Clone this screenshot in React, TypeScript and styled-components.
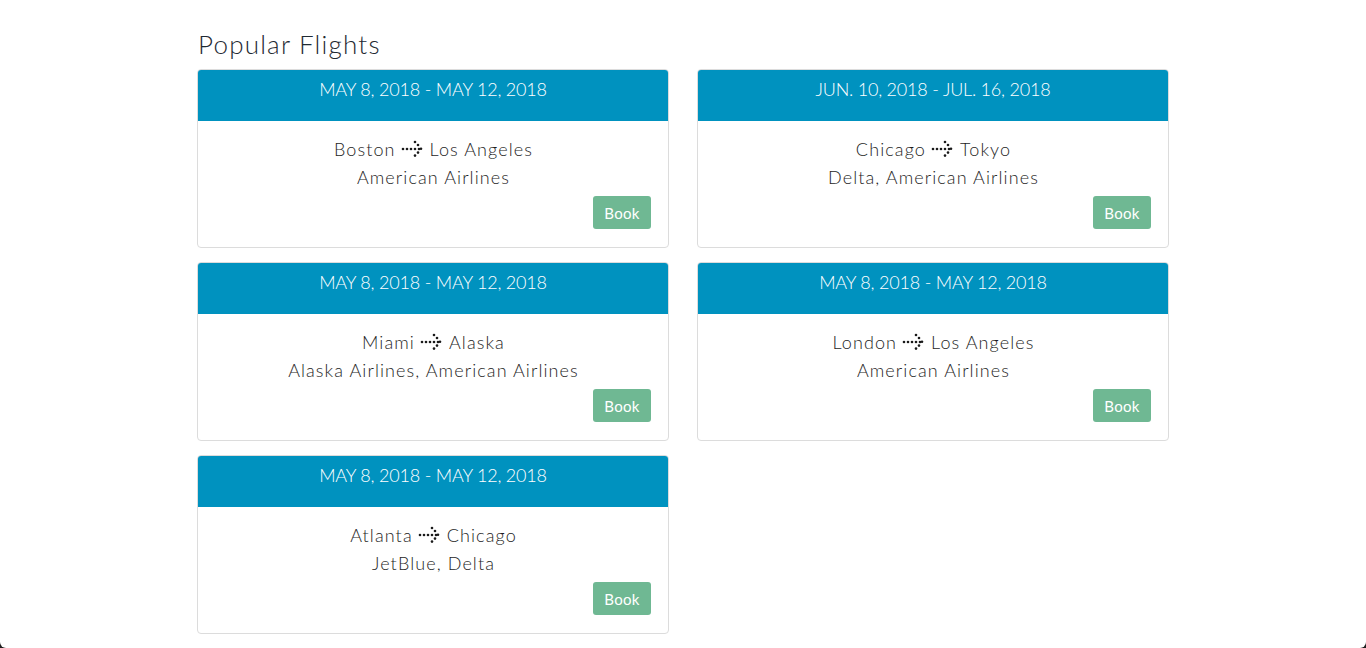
import styled, { createGlobalStyle } from 'styled-components';

interface Flight {
  dates: string,
  from: string,
  to: string,
  airlines: string,
}

const flights: Flight[] = [
  { dates: 'MAY 8, 2018 - MAY 12, 2018', from: 'Boston', to: 'Los Angeles', airlines: 'American Airlines' },
  { dates: 'JUN. 10, 2018 - JUL. 16, 2018', from: 'Chicago', to: 'Tokyo', airlines: 'Delta, American Airlines' },
  { dates: 'MAY 8, 2018 - MAY 12, 2018', from: 'Miami', to: 'Alaska', airlines: 'Alaska Airlines, American Airlines' },
  { dates: 'MAY 8, 2018 - MAY 12, 2018', from: 'London', to: 'Los Angeles', airlines: 'American Airlines' },
  { dates: 'MAY 8, 2018 - MAY 12, 2018', from: 'Atlanta', to: 'Chicago', airlines: 'JetBlue, Delta' },
];

const GlobalStyle = createGlobalStyle`
  html {
    background: #1e1e1e;
  }
  body {
    margin: 0;
    font-family: Lato, "Open Sans", sans-serif;
    font-weight: 300;
    color: #222;
  }
`;

const Page = styled.div`
  min-height: 648px;
  box-sizing: border-box;
  background: #fff;
  border-radius: 0 0 6px 6px;
  padding: 28px 0 14px;
`;

const Container = styled.div`
  width: 972px;
  margin: 0 auto;
`;

const Title = styled.h1`
  margin: 0 0 9px 1px;
  font-size: 26px;
  font-weight: 300;
  line-height: 32px;
  letter-spacing: 1.2px;
  color: #1f2a33;
`;

const Grid = styled.div`
  display: grid;
  grid-template-columns: repeat(2, 472px);
  column-gap: 28px;
  row-gap: 14px;
`;

const Card = styled.div`
  border: 1px solid #dcdcdc;
  border-radius: 4px;
  overflow: hidden;
  background: #fff;
`;

const Header = styled.div`
  height: 51px;
  box-sizing: border-box;
  padding-top: 8px;
  background: #0092bf;
  color: #fff;
  text-align: center;
  font-size: 18px;
  line-height: 22px;
  letter-spacing: -0.2px;
`;

const Body = styled.div`
  padding: 14px 17px 18px 18px;
  text-align: center;
  font-size: 18px;
  line-height: 28px;
  letter-spacing: 1.1px;
  color: #1e1e1e;
`;

const Route = styled.div`
  display: flex;
  justify-content: center;
  align-items: center;
  gap: 5px;
`;

const Actions = styled.div`
  display: flex;
  justify-content: flex-end;
  margin-top: 5px;
`;

const BookButton = styled.button`
  width: 58px;
  height: 33px;
  border: none;
  border-radius: 3px;
  background: #6fb893;
  color: #fff;
  font-family: inherit;
  font-size: 15px;
  font-weight: 400;
  letter-spacing: 0.3px;
  cursor: pointer;
  padding: 0;
`;

const DottedArrow = () => {
  const shaft = [2, 6, 10, 14, 18];
  const head = [[14, 2], [17, 5], [20, 8.8], [17, 12.6], [14, 15.6]];
  return (
    <svg width="24" height="18" viewBox="0 0 24 18">
      {shaft.map((x) => <circle key={'s' + x} cx={x} cy={9} r={1.3} fill="#1a1a1a" />)}
      {head.map(([x, y]) => <circle key={'h' + x + y} cx={x} cy={y} r={1.3} fill="#1a1a1a" />)}
    </svg>
  );
};

const FlightCard = ({ dates, from, to, airlines }: Flight) => (
  <Card>
    <Header>{dates}</Header>
    <Body>
      <Route>
        <span>{from}</span>
        <DottedArrow />
        <span>{to}</span>
      </Route>
      <div>{airlines}</div>
      <Actions>
        <BookButton>Book</BookButton>
      </Actions>
    </Body>
  </Card>
);

const App = () => (
  <>
    <GlobalStyle />
    <Page>
      <Container>
        <Title>Popular Flights</Title>
        <Grid>
          {flights.map((f, i) => <FlightCard key={i} {...f} />)}
        </Grid>
      </Container>
    </Page>
  </>
);

export default App;
